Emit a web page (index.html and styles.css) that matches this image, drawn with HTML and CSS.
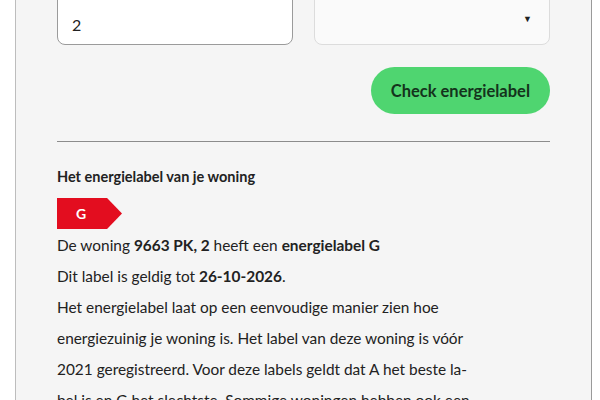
FILE: index.html
```html
<!DOCTYPE html>
<html lang="nl">
<head>
    <meta charset="UTF-8">
    <meta name="viewport" content="width=device-width, initial-scale=1.0">
    <title>Energielabel check</title>
    <link rel="stylesheet" href="styles.css">
</head>
<body>

    <div class="panel">
        <form class="check-form">
            <div class="fields">
                <input class="field" type="text" value="2">
                <div class="field select">
                    <span class="arrow">&#9660;</span>
                </div>
            </div>
            <div class="actions">
                <button type="button" class="check-button">Check energielabel</button>
            </div>
        </form>

        <hr class="divider">

        <div class="result">
            <h3>Het energielabel van je woning</h3>
            <div class="label label-g">G</div>
            <p>De woning <b>9663 PK, 2</b> heeft een <b>energielabel G</b></p>
            <p>Dit label is geldig tot <b>26-10-2026</b>.</p>
            <p class="info">Het energielabel laat op een eenvoudige manier zien hoe energiezuinig je woning is. Het label van deze woning is vóór 2021 geregistreerd. Voor deze labels geldt dat A het beste la&shy;bel is en G het slechtste. Sommige woningen hebben ook een energielabel met plussen.</p>
        </div>
    </div>

</body>
</html>
```

FILE: styles.css
```css
body {
    margin: 0;
    background-color: #fff;
    font-family: Lato, "Noto Sans", sans-serif;
    color: #222;
}

.panel {
    margin-left: 15px;
    width: 577px;
    box-sizing: border-box;
    background-color: #f5f5f5;
    border-left: 1px solid #bdbdbd;
    border-right: 1px solid #9a9a9a;
    padding: 0 41px 40px;
}

.fields {
    display: grid;
    grid-template-columns: 1fr 1fr;
    gap: 21px;
    margin-top: -12px;
}

.field {
    height: 57px;
    box-sizing: border-box;
    border-radius: 8px;
    font-family: inherit;
    font-size: 16px;
    color: #222;
    padding: 16px 14px 0;
}

input.field {
    background-color: #fff;
    border: 1px solid #9b9b9b;
    outline: none;
}

.select {
    background-color: #fafafa;
    border: 1px solid #dcdcdc;
    display: flex;
    justify-content: flex-end;
    align-items: center;
    padding: 3px 17px 0 0;
}

.arrow {
    font-size: 9px;
    color: #222;
}

.actions {
    display: flex;
    justify-content: flex-end;
    margin-top: 22px;
}

.check-button {
    height: 47px;
    padding: 0 20px;
    border: none;
    border-radius: 24px;
    background-color: #4fd570;
    color: #14331c;
    font-family: inherit;
    font-size: 16.5px;
    font-weight: bold;
    cursor: pointer;
}

.divider {
    border: none;
    border-top: 1px solid #8c8c8c;
    margin: 27px 0 0;
}

.result h3 {
    font-size: 14.5px;
    margin: 26px 0 13px;
}

.label {
    width: 65px;
    height: 31px;
    line-height: 31px;
    padding-left: 19px;
    box-sizing: border-box;
    color: #fff;
    font-size: 14px;
    font-weight: bold;
    clip-path: polygon(0 0, 77% 0, 100% 50%, 77% 100%, 0 100%);
}

.label-g {
    background-color: #e30d1f;
    margin-bottom: 1px;
}

.result p {
    font-size: 15.4px;
    line-height: 31px;
    margin: 0;
}

.result .info {
    max-width: 418px;
}
```
